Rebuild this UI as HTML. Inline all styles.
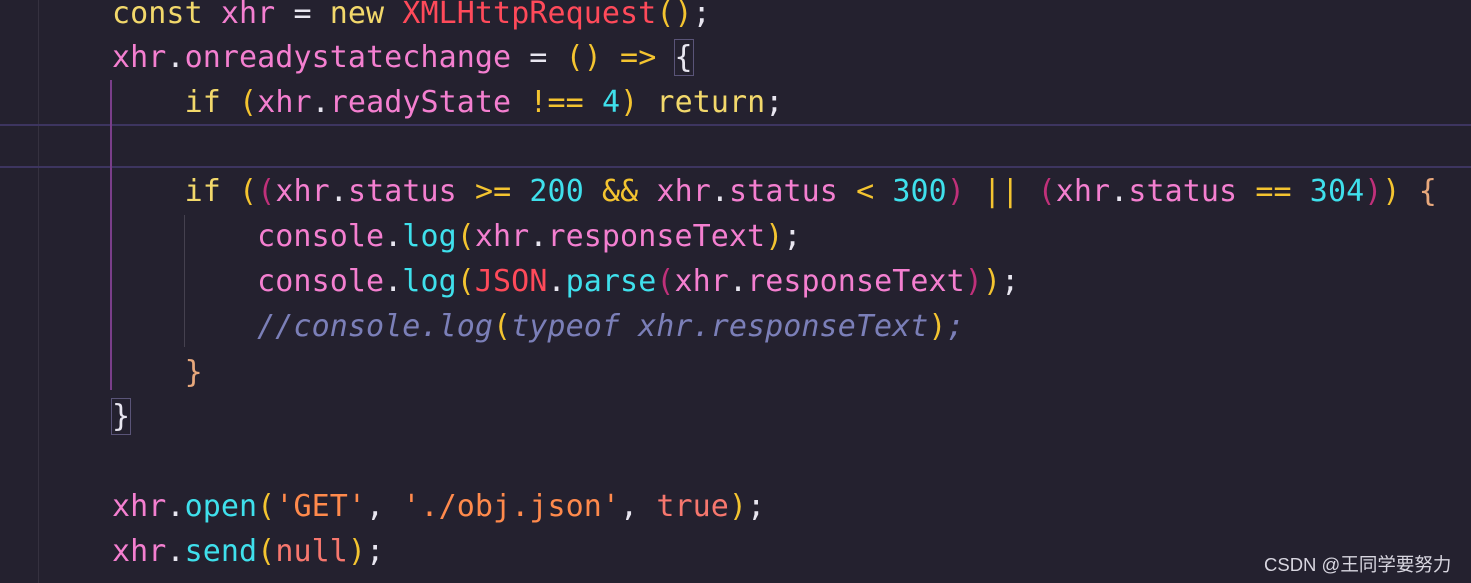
<!DOCTYPE html>
<html><head><style>
html,body{margin:0;padding:0;}
body{width:1471px;height:583px;background:#24212f;overflow:hidden;position:relative;font-family:"DejaVu Sans Mono","Liberation Mono",monospace;font-size:30px;}
.l{position:absolute;left:112px;height:45px;line-height:45px;white-space:pre;color:#e8e6f0;letter-spacing:0.08px;}
.k{color:#f2d86b}.r{color:#ff4a5a}.p{color:#f47fd0}.w{color:#e8e6f0}.y{color:#f4c430}.c{color:#3fe0ec}.m{color:#c0307a}.o{color:#ff8a4c}.s{color:#f7776e}.br{color:#e8a87c}
.cm{color:#7b7fb8;font-style:italic}
.v{position:absolute;width:1px;}
.hl{position:absolute;left:0;width:1471px;height:2px;background:#3d3560;}
.box{outline:1px solid #5a5478;}
</style></head><body>
<div class="v" style="left:38px;top:0;height:583px;background:#35313f"></div>
<div class="hl" style="top:124px"></div>
<div class="hl" style="top:166px"></div>
<div class="v" style="left:110px;top:80px;height:310px;background:#7a3e8a;width:2px"></div>
<div class="v" style="left:184px;top:215px;height:132px;background:#45414f"></div>
<div class="l" style="top:-9px"><span class="k">const</span> <span class="p">xhr</span> = <span class="k">new</span> <span class="r">XMLHttpRequest</span><span class="y">()</span>;</div>
<div class="l" style="top:35px"><span class="p">xhr</span>.<span class="p">onreadystatechange</span> = <span class="y">()</span> <span class="y">=&gt;</span> <span class="box">{</span></div>
<div class="l" style="top:80px">    <span class="k">if</span> <span class="y">(</span><span class="p">xhr</span>.<span class="p">readyState</span> <span class="y">!==</span> <span class="c">4</span><span class="y">)</span> <span class="k">return</span>;</div>
<div class="l" style="top:169px">    <span class="k">if</span> <span class="y">(</span><span class="m">(</span><span class="p">xhr</span>.<span class="p">status</span> <span class="y">&gt;=</span> <span class="c">200</span> <span class="y">&amp;&amp;</span> <span class="p">xhr</span>.<span class="p">status</span> <span class="y">&lt;</span> <span class="c">300</span><span class="m">)</span> <span class="y">||</span> <span class="m">(</span><span class="p">xhr</span>.<span class="p">status</span> <span class="y">==</span> <span class="c">304</span><span class="m">)</span><span class="y">)</span> <span class="br">{</span></div>
<div class="l" style="top:214px">        <span class="p">console</span>.<span class="c">log</span><span class="y">(</span><span class="p">xhr</span>.<span class="p">responseText</span><span class="y">)</span>;</div>
<div class="l" style="top:259px">        <span class="p">console</span>.<span class="c">log</span><span class="y">(</span><span class="r">JSON</span>.<span class="c">parse</span><span class="m">(</span><span class="p">xhr</span>.<span class="p">responseText</span><span class="m">)</span><span class="y">)</span>;</div>
<div class="l" style="top:304px">        <span class="cm">//console.log</span><span class="y">(</span><span class="cm">typeof xhr.responseText</span><span class="y">)</span><span class="cm">;</span></div>
<div class="l" style="top:350px">    <span class="br">}</span></div>
<div class="l" style="top:394px"><span class="box">}</span></div>
<div class="l" style="top:484px"><span class="p">xhr</span>.<span class="c">open</span><span class="y">(</span><span class="o">'GET'</span>, <span class="o">'./obj.json'</span>, <span class="s">true</span><span class="y">)</span>;</div>
<div class="l" style="top:529px"><span class="p">xhr</span>.<span class="c">send</span><span class="y">(</span><span class="s">null</span><span class="y">)</span>;</div>
<div style="position:absolute;left:1264px;top:551px;font-family:'Liberation Sans','Noto Sans CJK SC',sans-serif;font-size:18.5px;color:#d8d6e0;">CSDN @王同学要努力</div>
</body></html>
